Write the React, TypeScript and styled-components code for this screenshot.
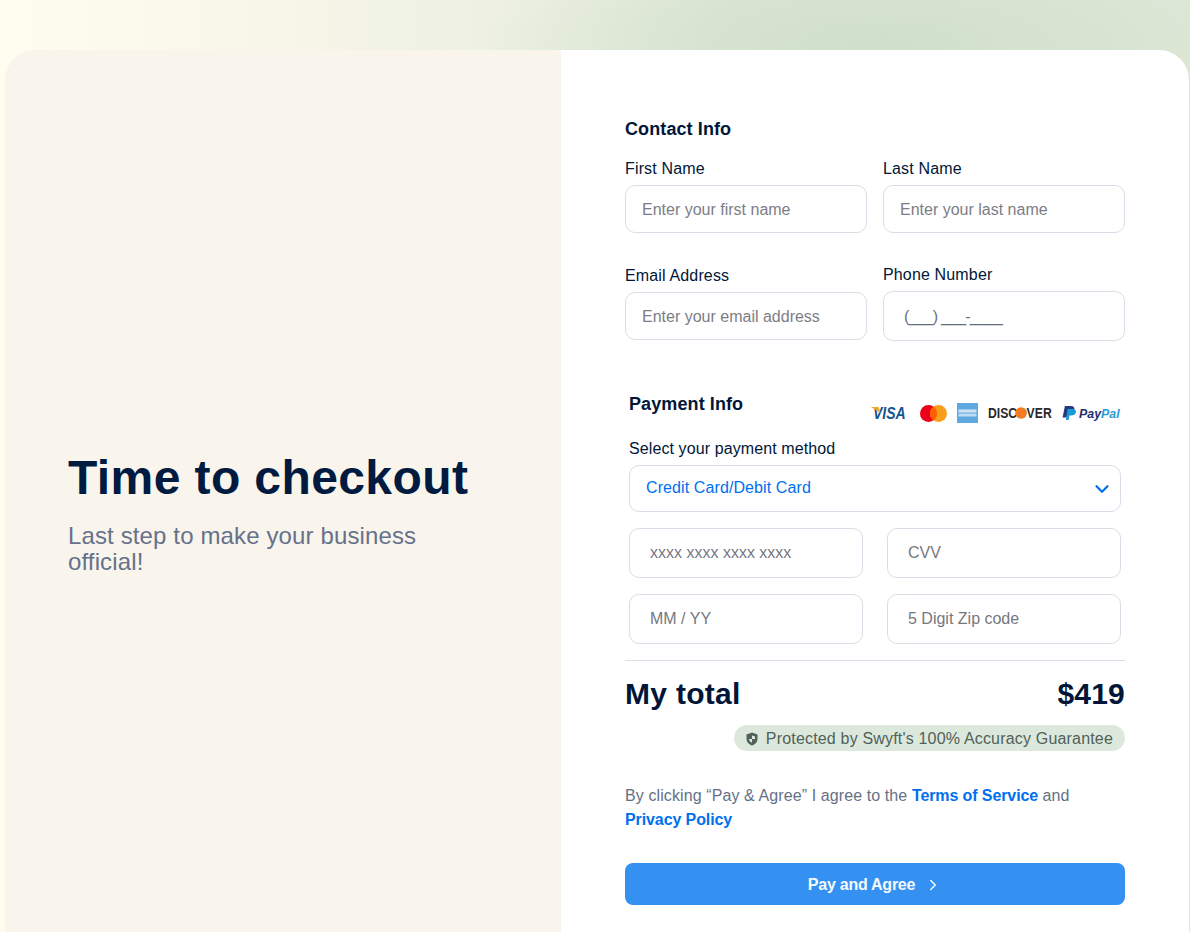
import React from 'react'
import styled, {createGlobalStyle} from 'styled-components'
import {ChevronDown, ChevronRight} from 'lucide-react'

const GlobalStyle=createGlobalStyle`
html,body{
margin:0;
height:100%;
overflow:hidden;
}
body{
font-family:"Liberation Sans",Arial,sans-serif;
color:#011638;
}
*{box-sizing:border-box;}
`

const Page=styled.div`
height:932px;
overflow:hidden;
padding:50px 0 0 5px;
background:
  radial-gradient(ellipse 400px 110px at 880px 45px,#cfdfc9 0%,rgba(207,223,201,0) 100%),
  linear-gradient(90deg,#fffdf0 0%,#f8f7ea 20%,#ebefe1 45%,#e0e8d8 62%,#dfe8d9 100%);
`

const Card=styled.div`
display:flex;
width:1184px;
border-radius:30px 30px 0 0;
overflow:hidden;
background:#fff;
`

const Intro=styled.section`
width:556px;
display:flex;
flex-direction:column;
justify-content:center;
padding:5px 64px 0 63px;
background:#f9f5ed;
`

const Title=styled.h1`
margin:0 0 17px;
font-size:48px;
line-height:56px;
font-weight:700;
letter-spacing:.4px;
color:#001a40;
`

const Subtitle=styled.p`
margin:0;
max-width:370px;
font-size:24px;
line-height:26px;
letter-spacing:.13px;
color:#66718a;
`

const Checkout=styled.form`
width:628px;
padding:69px 64px 64px 64px;
`

const SectionTitle=styled.h2`
margin:0;
font-size:18px;
line-height:20px;
font-weight:700;
letter-spacing:.1px;
color:#011638;
`

const ContactTitle=styled(SectionTitle)`
margin-bottom:21px;
`

const FieldGrid=styled.div`
display:grid;
grid-template-columns:242px 242px;
column-gap:16px;
row-gap:33px;
`

const Field=styled.label<{$lift?:boolean}>`
display:flex;
flex-direction:column;
justify-content:flex-end;
gap:7px;
padding-bottom:${({$lift})=>$lift?'1px':'0'};
`

const FieldLabel=styled.span`
font-size:16px;
line-height:18px;
letter-spacing:.15px;
color:#011638;
`

const TextInput=styled.input<{$tall?:boolean}>`
width:100%;
height:${({$tall})=>$tall?'50px':'48px'};
padding:2px 16px 0;
border:1px solid #dcdce8;
border-radius:10px;
outline:none;
background:#fff;
font-family:inherit;
font-size:16px;
color:#011638;
&::placeholder{
color:#7d7d85;
opacity:1;
}
`

const PhoneInput=styled(TextInput)`
padding-left:20px;
letter-spacing:-.8px;
&::placeholder{
color:#667085;
}
`

const PaymentBlock=styled.div`
margin-top:53px;
padding:0 4px;
`

const PaymentHead=styled.div`
display:flex;
justify-content:space-between;
align-items:flex-start;
height:46px;
`

const Logos=styled.div`
display:flex;
align-items:center;
gap:10px;
padding-top:9px;
`

const MethodLabel=styled.div`
font-size:16px;
line-height:18px;
letter-spacing:.1px;
margin-bottom:7px;
color:#011638;
`

const MethodSelect=styled.div`
display:flex;
justify-content:space-between;
align-items:center;
height:47px;
padding:0 7px 0 16px;
border:1px solid #dcdce8;
border-radius:10px;
font-size:16px;
letter-spacing:.1px;
color:#0070f0;
`

const MethodValue=styled.span`
margin-bottom:2px;
`

const CardGrid=styled.div`
display:grid;
grid-template-columns:234px 234px;
column-gap:24px;
row-gap:16px;
margin-top:16px;
`

const CardInput=styled(TextInput)`
padding:0 20px;
&::placeholder{
color:#77777f;
}
`

const Divider=styled.hr`
margin:16px 0 0;
border:0;
border-top:1px solid #dcdce8;
`

const TotalRow=styled.div`
display:flex;
justify-content:space-between;
align-items:center;
height:64px;
padding-top:2px;
font-size:30px;
font-weight:700;
letter-spacing:.2px;
color:#011638;
`

const TotalLabel=styled.span`
letter-spacing:.3px;
`

const BadgeRow=styled.div`
display:flex;
justify-content:flex-end;
`

const Badge=styled.div`
display:flex;
align-items:center;
gap:8px;
height:26px;
padding:1px 12px 0;
border-radius:13px;
background:#dde8dd;
font-size:16px;
letter-spacing:.18px;
color:#4f6158;
`

const Legal=styled.p`
margin:33px 0 31px;
font-size:16px;
line-height:24px;
letter-spacing:.1px;
color:#667085;
`

const LegalLink=styled.a`
font-weight:700;
letter-spacing:-.1px;
color:#0070f0;
text-decoration:none;
`

const PayButton=styled.button`
display:flex;
justify-content:center;
align-items:center;
gap:9px;
width:100%;
height:42px;
padding:1px 0 0;
border:0;
border-radius:8px;
background:#3491f2;
font-family:inherit;
font-size:16px;
font-weight:700;
letter-spacing:-.25px;
color:#f4f9ff;
`

const VisaLogo=()=>(
    <svg width="35" height="20" viewBox="0 0 35 20" style={{marginRight:4}}>
        <text x="2" y="13" transform="scale(1,1.2)" fontFamily="Liberation Sans" fontSize="14" fontWeight="700" fontStyle="italic" fill="#15558f">VISA</text>
        <path d="M0 4h7.500l2 6z" fill="#f0a72c"/>
    </svg>
)

const MastercardLogo=()=>(
    <svg width="27" height="17" viewBox="0 0 27 17">
        <circle cx="8.500" cy="8.500" r="8.500" fill="#eb001b"/>
        <circle cx="18.500" cy="8.500" r="8.500" fill="#f79e1b"/>
        <path d="M13.500 1.600a8.500 8.500 0 0 1 0 13.800a8.500 8.500 0 0 1 0-13.800z" fill="#ff5f00"/>
    </svg>
)

const AmexLogo=()=>(
    <svg width="21" height="20" viewBox="0 0 21 20">
        <rect width="21" height="20" fill="#5fa8e0"/>
        <rect x="1.500" y="6.500" width="18" height="3" fill="#cfe5f6"/>
        <rect x="1.500" y="10.500" width="18" height="3" fill="#bcdcf3"/>
    </svg>
)

const DiscoverLogo=()=>(
    <svg width="64" height="20" viewBox="0 0 64 20">
        <text x="0" y="12.500" transform="scale(1,1.2)" fontFamily="Liberation Sans" fontSize="12.200" fontWeight="700" fill="#2b2829">DISCOVER</text>
        <circle cx="33" cy="10" r="5.800" fill="#f47b20"/>
    </svg>
)

const PaypalLogo=()=>(
    <svg width="60" height="20" viewBox="0 0 60 20" style={{marginLeft:-1}}>
        <g transform="translate(1,0) scale(1.15,1)">
            <path d="M2.500 3h5c2.600 0 3.700 1.600 3.200 3.600c-.5 2.400-2.200 3.600-4.600 3.600H4.800L3.900 14.500H.5z" fill="#253b80"/>
            <path d="M5 6h4.500c2 .2 3 1.400 2.600 3.300c-.5 2.200-2 3.300-4.200 3.300H6.500L5.700 17H3.400z" fill="#179bd7"/>
        </g>
        <text x="18" y="15" fontFamily="Liberation Sans" fontSize="12.400" fontWeight="700" fontStyle="italic" fill="#1f2f6f">Pay<tspan fill="#2a9ad6">Pal</tspan></text>
    </svg>
)

const ShieldIcon=()=>(
    <svg width="12" height="14" viewBox="0 0 12 14">
        <path d="M6 .5L11.500 2.500V7c0 3.200-2.300 5.400-5.500 6.500C2.800 12.400.5 10.200.5 7V2.500z" fill="#4f6158"/>
        <path d="M6 3.500L9 4.600V7H6zM6 7H3c.1 1.700 1.200 3 3 3.700z" fill="#dde8dd"/>
    </svg>
)

export default function App():React.ReactElement{
    return (
        <Page>
            <GlobalStyle/>
            <Card>
                <Intro>
                    <Title>Time to checkout</Title>
                    <Subtitle>Last step to make your business official!</Subtitle>
                </Intro>
                <Checkout>
                    <ContactTitle>Contact Info</ContactTitle>
                    <FieldGrid>
                        <Field>
                            <FieldLabel>First Name</FieldLabel>
                            <TextInput placeholder="Enter your first name"/>
                        </Field>
                        <Field>
                            <FieldLabel>Last Name</FieldLabel>
                            <TextInput placeholder="Enter your last name"/>
                        </Field>
                        <Field $lift>
                            <FieldLabel>Email Address</FieldLabel>
                            <TextInput placeholder="Enter your email address"/>
                        </Field>
                        <Field>
                            <FieldLabel>Phone Number</FieldLabel>
                            <PhoneInput $tall placeholder="(___) ___-____"/>
                        </Field>
                    </FieldGrid>
                    <PaymentBlock>
                        <PaymentHead>
                            <SectionTitle>Payment Info</SectionTitle>
                            <Logos>
                                <VisaLogo/>
                                <MastercardLogo/>
                                <AmexLogo/>
                                <DiscoverLogo/>
                                <PaypalLogo/>
                            </Logos>
                        </PaymentHead>
                        <MethodLabel>Select your payment method</MethodLabel>
                        <MethodSelect>
                            <MethodValue>Credit Card/Debit Card</MethodValue>
                            <ChevronDown size={22} strokeWidth={2.4} color="#0070f0"/>
                        </MethodSelect>
                        <CardGrid>
                            <CardInput $tall placeholder="xxxx xxxx xxxx xxxx"/>
                            <CardInput $tall placeholder="CVV"/>
                            <CardInput $tall placeholder="MM / YY"/>
                            <CardInput $tall placeholder="5 Digit Zip code"/>
                        </CardGrid>
                    </PaymentBlock>
                    <Divider/>
                    <TotalRow>
                        <TotalLabel>My total</TotalLabel>
                        <span>$419</span>
                    </TotalRow>
                    <BadgeRow>
                        <Badge>
                            <ShieldIcon/>
                            Protected by Swyft's 100% Accuracy Guarantee
                        </Badge>
                    </BadgeRow>
                    <Legal>
                        By clicking “Pay &amp; Agree” I agree to the <LegalLink>Terms of Service</LegalLink> and <LegalLink>Privacy Policy</LegalLink>
                    </Legal>
                    <PayButton type="button">
                        Pay and Agree
                        <ChevronRight size={18} strokeWidth={2} color="#f4f9ff"/>
                    </PayButton>
                </Checkout>
            </Card>
        </Page>
    )
}
